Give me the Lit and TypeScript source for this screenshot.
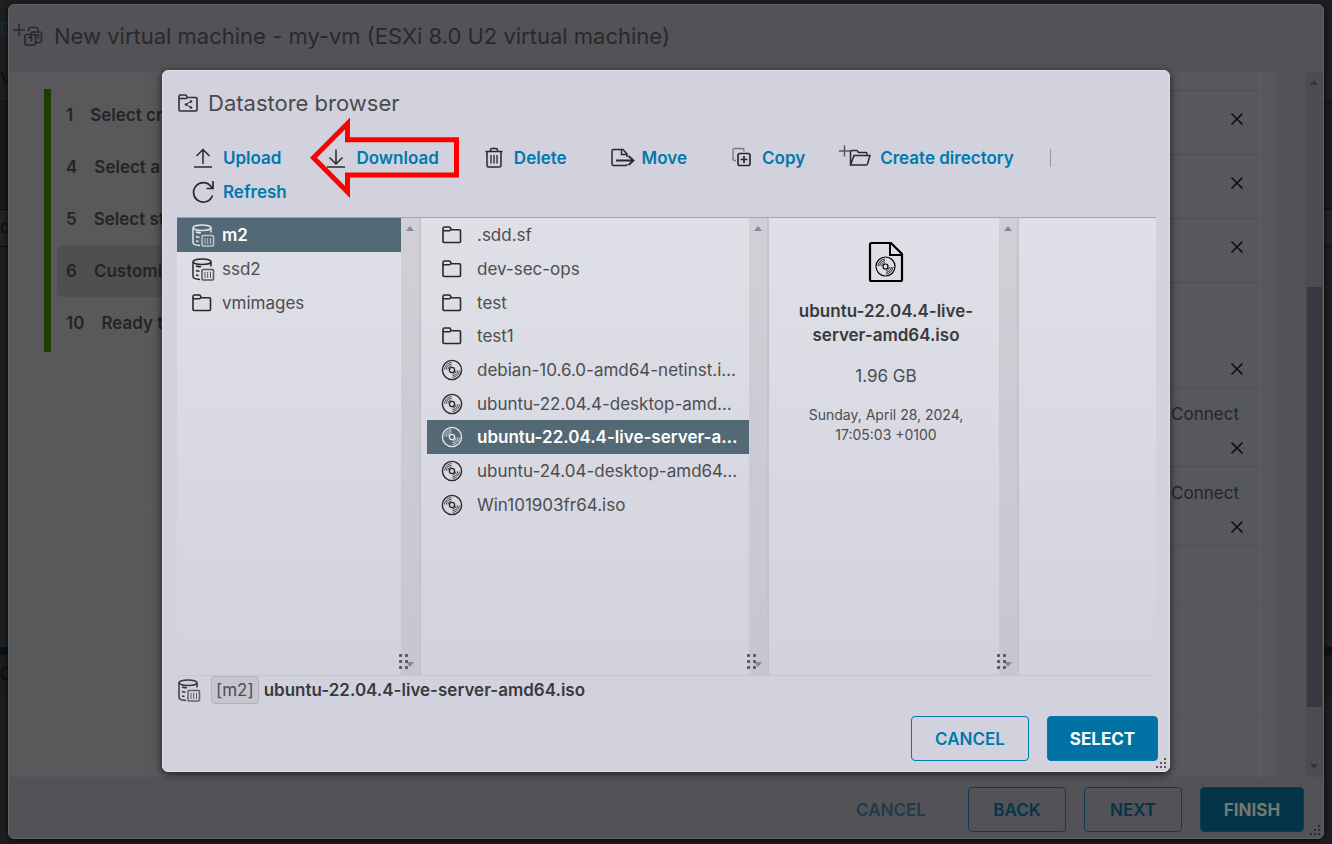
import { LitElement, html, css, svg, nothing } from "lit";
import { customElement, property, state } from "lit/decorators.js";
import { classMap } from "lit/directives/class-map.js";

const glyphs: Record<string, { w: number; h: number; body: unknown }> = {
  newVm: {
    w: 30, h: 24,
    body: svg`<path d="M6 0v12M0 6h12"/><path stroke-width="1.500" d="M15.500 7.500V5a1.500 1.500 0 0 1 1.500-1.500h6.500a1.500 1.500 0 0 1 1.500 1.500V7"/><rect x="12" y="10.500" width="10.500" height="10.500" rx="1.500" stroke-width="1.600"/><path stroke-width="1.600" d="M18 15V9.500Q18 8 19.500 8H27q1.500 0 1.500 1.500V17q0 1.500-1.500 1.500h-4M15 13.500h3.500v4M21.500 11h4v4"/>`,
  },
  folderShare: {
    w: 22, h: 22,
    body: svg`<path stroke-width="1.600" d="M2 18V4.500Q2 3 3.500 3h4.500q1 0 1.500 1l.8 1.500H19q1 0 1 1V18q0 1-1 1H3q-1 0-1-1zM2 6.500h8"/><path stroke-width="1" d="M14 9.500l-5 3 5 3"/><circle cx="14" cy="9.500" r=".6"/><circle cx="9" cy="12.500" r=".6"/><circle cx="14" cy="15.500" r=".6"/>`,
  },
  upload: { w: 22, h: 22, body: svg`<path d="M11 17V2.500M4.500 9L11 2.500 17.500 9M2 20h18"/>` },
  download: { w: 22, h: 22, body: svg`<path d="M11 2.500V17M4.500 10.500L11 17l6.500-6.500M2 20h18"/>` },
  refresh: { w: 22, h: 22, body: svg`<path stroke-width="1.700" d="M20.500 14.500A9.700 9.700 0 1 1 19 5.500l1.500 2M21 0v7.500h-6.500"/>` },
  trash: {
    w: 22, h: 22,
    body: svg`<path stroke-width="1.500" d="M2.500 4.500h17M7.500 4V3q0-1.500 1.500-1.500h4q1.500 0 1.500 1.500v1M4 5V18.500q0 1.500 1.500 1.500h11q1.500 0 1.500-1.500V5"/><path stroke-width="1.300" d="M8 8v8.500M11 8v8.500M14 8v8.500"/>`,
  },
  move: {
    w: 22, h: 22,
    body: svg`<path stroke-width="1.500" d="M16 10V7l-4-4.500H2.500Q1 2.500 1 4v13q0 1.500 1.500 1.500H14.500Q16 18.500 16 17M10.500 3v4.500H16"/><path stroke-width="1.900" d="M5 13.500h17M17.500 9l5 4.500-5 4.500"/>`,
  },
  copy: {
    w: 22, h: 22,
    body: svg`<path stroke="#77777f" stroke-width="1.300" d="M5 13.500H3.500Q2 13.500 2 12V3q0-1.500 1.500-1.500H11.500Q13 1.500 13 3v1.500"/><rect x="7" y="6.500" width="12" height="12" rx="1.500" stroke-width="1.700"/><path stroke-width="1.700" d="M13 9v7M9.500 12.500h7"/>`,
  },
  createDir: {
    w: 22, h: 22,
    body: svg`<path stroke="#55555c" d="M-4.500-1.500v11M-10 4h11"/><path stroke-width="1.500" d="M18 7.500V6.500Q18 5.500 17 5.500H9.500L8 3.500H3Q1.500 3.500 1.500 5V18M1.500 18L5 8.500h16l-2.500 8.500q-.5 1-1.500 1z"/>`,
  },
  folder: {
    w: 22, h: 22,
    body: svg`<path stroke-width="1.600" d="M2 18V4.500Q2 3 3.500 3h4.500q1 0 1.500 1l.8 1.700H18.500q1 0 1 1V17.500q0 1-1 1H3q-1 0-1-1zM2 6.800h6.500l1.500-1.100"/>`,
  },
  disc: {
    w: 22, h: 22,
    body: svg`<circle cx="11" cy="11" r="9.600" stroke-width="1.400"/><circle cx="11" cy="11" r="2.600" stroke-width="1.300"/><path stroke-width=".8" d="M3.500 10.500A7.600 7.600 0 0 1 10.500 3.500M5.200 10.500a6 6 0 0 1 5.300-5.300M6.800 10.500a4.300 4.300 0 0 1 3.700-3.700M18.500 11.500a7.600 7.600 0 0 1-7 7M16.800 11.500a6 6 0 0 1-5.300 5.300M15.200 11.500a4.300 4.300 0 0 1-3.700 3.700"/>`,
  },
  datastore: {
    w: 22, h: 24,
    body: svg`<ellipse cx="11" cy="4.800" rx="9" ry="2.800" stroke-width="1.500"/><path stroke-width="1.500" d="M2 5v14.500q0 2.500 7 3M20 5V9.500M5 9q2 .8 5 .8M5 13.500q1.500.6 3.500.7M5 18q1.200.4 2.500.5"/><rect x="11" y="12.500" width="11.500" height="10.500" rx="1" stroke-width="1.500" opacity=".75"/><path stroke-width="1" opacity=".75" d="M14 15v6M16.700 15v6M19.500 15v6"/>`,
  },
  iso: {
    w: 36, h: 42,
    body: svg`<path stroke-width="2.200" d="M2 3.500Q2 2 3.500 2H23L34 13V38.500Q34 40 32.500 40h-29Q2 40 2 38.500z"/><path stroke-width="2" d="M22 2.500V14h11.500"/><circle cx="17.500" cy="25.500" r="9.500" stroke-width="1.200"/><circle cx="17.500" cy="25.500" r="2.500" stroke-width="1.200"/><path stroke-width=".8" d="M10 25a7.500 7.500 0 0 1 7-7M11.700 25a5.800 5.800 0 0 1 5.300-5.300M13.400 25a4.200 4.200 0 0 1 3.600-3.600M25 26a7.500 7.500 0 0 1-7 7M23.300 26a5.800 5.800 0 0 1-5.300 5.300M21.600 26a4.200 4.200 0 0 1-3.600 3.600"/>`,
  },
  close: { w: 14, h: 14, body: svg`<path stroke-width="1.500" d="M1.500 1.500l11 11M12.500 1.500l-11 11"/>` },
};

function icon(name: string) {
  const g = glyphs[name];
  return html`<svg class="icon" width=${g.w} height=${g.h} viewBox="0 0 ${g.w} ${g.h}" aria-hidden="true">${g.body}</svg>`;
}

const shared = css`
  * { box-sizing: border-box; }
  ul, ol, p, h1, h2 { margin: 0; padding: 0; list-style: none; font-weight: inherit; }
  button { font: inherit; color: inherit; background: none; border: 0; padding: 0; margin: 0; cursor: pointer; }
  .icon { flex: none; display: block; overflow: visible; fill: none; stroke: currentColor; stroke-width: 1.5; }
  .action {
    height: 45px; padding: 0 16px; border: 1px solid #0079ad; border-radius: 4px;
    color: #0079ad; font-size: 17px; font-weight: 600; line-height: 20px; text-transform: uppercase;
  }
  .action.primary { background: #0072a3; color: #fff; font-weight: 700; }
  .up, .down { width: 0; height: 0; border: 4px solid transparent; }
  .up { border-top: 0; border-bottom: 5px solid #8686a4; }
  .down { border-bottom: 0; border-top: 5px solid #8686a4; }
  .grip { position: absolute; right: 3px; bottom: 3px; fill: #55555e; }
`;

const grip = html`<svg class="grip" width="10" height="10" viewBox="0 0 10 10" aria-hidden="true">${[
  [8, 0], [4, 4], [8, 4], [0, 8], [4, 8], [8, 8],
].map(([x, y]) => svg`<rect x=${x} y=${y} width="2" height="2"/>`)}</svg>`;

interface Entry { icon: string; name: string; }

@customElement("file-column")
class FileColumn extends LitElement {
  @property({ attribute: false }) entries: Entry[] = [];
  @property() selected = "";
  @property({ type: Boolean }) wide = false;

  static styles = [shared, css`
    :host { display: flex; min-width: 0; }
    .list { flex: 1; min-width: 0; }
    .wide { padding-left: 6px; }
    .entry {
      display: flex; align-items: center; width: 100%; height: 34px; padding: 0 4px 0 14px; gap: 9px;
      font-size: 17px; line-height: 24px; color: #4d4d50; white-space: nowrap; text-align: left;
    }
    li:nth-child(3n) .entry { height: 33px; }
    .wide .entry { gap: 14px; }
    .name { overflow: hidden; text-overflow: ellipsis; }
    .entry .icon { color: #29292b; }
    .entry.on { background: #546976; color: #fff; font-weight: 600; }
    .entry.on .icon { color: #dfe5e9; }
    .track {
      position: relative; display: flex; flex-direction: column; justify-content: space-between; align-items: center;
      width: 20px; padding: 8px 0; background: linear-gradient(#d0d0d6, #c6c6d2); border-right: 2px solid #c3c3cc;
    }
    .handle { position: absolute; left: -2px; bottom: 6px; fill: #55555c; }
  `];

  private pick(name: string) {
    this.selected = name;
  }

  render() {
    return html`
      <ul class=${classMap({ list: true, wide: this.wide })}>
        ${this.entries.map((e) => html`<li>
          <button class=${classMap({ entry: true, on: e.name === this.selected })} @click=${() => this.pick(e.name)}>
            ${icon(e.icon)}<span class="name">${e.name}</span>
          </button>
        </li>`)}
        <slot></slot>
      </ul>
      <div class="track">
        <span class="up"></span>
        <svg class="handle" width="9" height="15" viewBox="0 0 9 15" aria-hidden="true">
          ${[0, 6, 12].map((y) => svg`<rect y=${y} width="3" height="3" rx="1"/><rect x="6" y=${y} width="3" height="3" rx="1"/>`)}
        </svg>
        <span class="down"></span>
      </div>`;
  }
}

@customElement("datastore-browser")
class DatastoreBrowser extends LitElement {
  static styles = [shared, css`
    :host {
      display: flex; flex-direction: column; padding: 0 11px 10px 14px; color: #3a3a3c;
      background: #d2d2de; border: 1px solid #e2e2ec; border-radius: 6px; box-shadow: 0 2px 9px rgba(0, 0, 0, .7);
    }
    .title { display: flex; align-items: center; gap: 9px; height: 64px; font-size: 22px; line-height: 28px; color: #4a4a4c; }
    .title .icon { color: #303033; }
    .tools { display: flex; flex-wrap: wrap; align-items: center; column-gap: 44px; padding: 6px 15px 8px; }
    .tool { display: flex; align-items: center; gap: 9px; height: 34px; color: #0079ad; font-size: 17px; font-weight: 600; line-height: 24px; }
    .tool .icon { color: #29292b; }
    .divider { width: 1px; height: 18px; margin-left: -8px; background: #96969e; }
    .panes {
      flex: 1; min-height: 0; margin-right: 2px; display: grid; grid-template-columns: 244fr 348fr 250fr 137fr;
      background: linear-gradient(#dfe0e7, #d2d2de); border-top: 1px solid #a3a3ab; border-bottom: 1px solid #c6c6cd;
    }
    .preview { display: flex; flex-direction: column; align-items: center; padding: 23px 20px 0 24px; text-align: center; }
    .preview .icon { color: #000; }
    .file { margin-top: 16px; font-size: 17px; font-weight: 600; line-height: 24px; }
    .size { margin: 17px 0; font-size: 17px; line-height: 24px; color: #4d4d50; }
    .date { font-size: 14px; line-height: 20px; color: #4d4d50; }
    .path { display: flex; align-items: center; height: 27px; font-size: 17px; line-height: 24px; }
    .tag { margin: 0 5px 0 12px; padding: 1px 4px; border: 1px solid #b2b2ba; border-radius: 4px; background: #c6c6d0; color: #4d4d50; }
    .chosen { font-weight: 600; }
    .actions { display: flex; justify-content: flex-end; gap: 18px; margin-top: 13px; }
    .actions .action { min-width: 111px; }
    .actions .wide { min-width: 118px; }
  `];

  private stores: Entry[] = [
    { icon: "datastore", name: "m2" },
    { icon: "datastore", name: "ssd2" },
    { icon: "folder", name: "vmimages" },
  ];

  private files: Entry[] = [
    { icon: "folder", name: ".sdd.sf" },
    { icon: "folder", name: "dev-sec-ops" },
    { icon: "folder", name: "test" },
    { icon: "folder", name: "test1" },
    { icon: "disc", name: "debian-10.6.0-amd64-netinst.i…" },
    { icon: "disc", name: "ubuntu-22.04.4-desktop-amd…" },
    { icon: "disc", name: "ubuntu-22.04.4-live-server-a…" },
    { icon: "disc", name: "ubuntu-24.04-desktop-amd64…" },
    { icon: "disc", name: "Win101903fr64.iso" },
  ];

  private tool(name: string, label: string) {
    return html`<button class="tool">${icon(name)}<span>${label}</span></button>`;
  }

  render() {
    return html`
      <h2 class="title">${icon("folderShare")}<span>Datastore browser</span></h2>
      <div class="tools">
        ${this.tool("upload", "Upload")} ${this.tool("download", "Download")} ${this.tool("trash", "Delete")}
        ${this.tool("move", "Move")} ${this.tool("copy", "Copy")} ${this.tool("createDir", "Create directory")}
        <span class="divider"></span>
        ${this.tool("refresh", "Refresh")}
      </div>
      <div class="panes">
        <file-column .entries=${this.stores} selected="m2"></file-column>
        <file-column wide .entries=${this.files} selected="ubuntu-22.04.4-live-server-a…"></file-column>
        <file-column>
          <div class="preview">
            ${icon("iso")}
            <p class="file">ubuntu-22.04.4-live-server-amd64.iso</p>
            <p class="size">1.96 GB</p>
            <p class="date">Sunday, April 28, 2024, 17:05:03 +0100</p>
          </div>
        </file-column>
      </div>
      <div class="path">${icon("datastore")}<span class="tag">[m2]</span><span class="chosen">ubuntu-22.04.4-live-server-amd64.iso</span></div>
      <div class="actions">
        <button class="action wide">Cancel</button>
        <button class="action primary">Select</button>
      </div>
      ${grip}`;
  }
}

@customElement("vm-wizard")
class VmWizard extends LitElement {
  @state() private current = 6;

  static styles = [shared, css`
    :host {
      display: flex; flex-direction: column; color: #242426; background: #535257;
      border: 1px solid #626266; border-radius: 6px; box-shadow: 0 1px 6px rgba(0, 0, 0, .8);
    }
    .title { display: flex; align-items: center; gap: 11px; height: 67px; padding: 0 4px 6px; font-size: 22px; line-height: 28px; color: #29292b; }
    .body { flex: 1; min-height: 0; display: flex; background: linear-gradient(90deg, #59595b, #57585c); overflow: hidden; }
    .steps { align-self: flex-start; margin: 17px 0 0 35px; padding-bottom: 3px; border-left: 7px solid #1c3d04; }
    .step { display: flex; align-items: center; height: 52px; width: 240px; margin-left: 6px; padding-left: 9px; gap: 17px; border-radius: 6px; font-size: 17px; font-weight: 600; line-height: 24px; }
    .step.on { background: #4f4f51; }
    .hardware { flex: 1; display: flex; justify-content: flex-end; padding-right: 15px; }
    .rows { width: 160px; border-right: 1px solid #5f6064; }
    .row { display: flex; flex-direction: column; justify-content: flex-end; align-items: flex-end; gap: 17px; padding: 0 15px 28px 0; height: 64px; border-bottom: 1px solid #4e4e51; font-size: 17px; line-height: 20px; }
    .row.first { height: 19px; padding: 0; }
    .row.tall { height: 105px; padding-bottom: 11px; }
    .row.mid { height: 79px; padding-bottom: 11px; }
    .row.blank { height: 62px; border-color: #535356; }
    .row.gap { height: 108px; border-color: #535356; }
    .remove { color: #0c0c0d; }
    .connect { padding-right: 5px; }
    .gutter { width: 30px; background: #545358; }
    .track { display: flex; flex-direction: column; align-items: center; width: 18px; padding: 8px 0; background: #4d4c51; }
    .thumb { width: 15px; margin: auto 0 57px; height: 61%; background: #383742; }
    .track .up { border-bottom-color: #34343f; }
    .track .down { border-top-color: #34343f; }
    .foot { display: flex; align-items: center; justify-content: flex-end; gap: 18px; height: 61px; padding: 4px 19px 0 0; }
    .foot .action { min-width: 98px; border-color: #0a3f56; color: #05354a; }
    .foot .primary { min-width: 104px; background: #043448; color: #77786f; }
    .foot .plain { min-width: 118px; border-color: transparent; color: #1e3b4d; }
    .grip { fill: #2b2b30; }
  `];

  private steps: [number, string][] = [
    [1, "Select creation type"],
    [4, "Select a name"],
    [5, "Select storage"],
    [6, "Customize settings"],
    [10, "Ready to complete"],
  ];

  private rows: { kind: string; remove?: boolean; connect?: boolean }[] = [
    { kind: "first" },
    { kind: "", remove: true },
    { kind: "", remove: true },
    { kind: "", remove: true },
    { kind: "tall", remove: true },
    { kind: "mid", remove: true, connect: true },
    { kind: "mid", remove: true, connect: true },
    { kind: "blank" },
    { kind: "gap" },
  ];

  render() {
    return html`
      <h1 class="title">${icon("newVm")}<span>New virtual machine - my-vm (ESXi 8.0 U2 virtual machine)</span></h1>
      <div class="body">
        <ol class="steps">
          ${this.steps.map(([n, label]) => html`<li>
            <button class=${classMap({ step: true, on: n === this.current })} @click=${() => (this.current = n)}>
              <span>${n}</span><span>${label}</span>
            </button>
          </li>`)}
        </ol>
        <div class="hardware">
          <div class="rows">
            ${this.rows.map((r) => html`<div class="row ${r.kind}">
              ${r.connect ? html`<span class="connect">Connect</span>` : nothing}
              ${r.remove ? html`<button class="remove" aria-label="Remove">${icon("close")}</button>` : nothing}
            </div>`)}
          </div>
        </div>
        <div class="gutter"></div>
        <div class="track"><span class="up"></span><span class="thumb"></span><span class="down"></span></div>
      </div>
      <div class="foot">
        <button class="action plain">Cancel</button>
        <button class="action">Back</button>
        <button class="action">Next</button>
        <button class="action primary">Finish</button>
      </div>
      ${grip}`;
  }
}

@customElement("app-root")
class AppRoot extends LitElement {
  static styles = [shared, css`
    :host {
      display: block; position: relative; height: 100vh; overflow: hidden; background: #1f1f21;
      font-family: Inter, "Open Sans", sans-serif; text-align: left;
    }
    .behind { display: flex; flex-direction: column; height: 100%; font-size: 17px; line-height: 24px; color: #0b0b0c; }
    .bar { height: 56px; padding-top: 17px; color: #0a3548; }
    .tabs { height: 45px; padding-top: 10px; border-bottom: 1px solid #161618; }
    .tree { height: 108px; background: #1a1a1d; }
    .field { height: 38px; border: 1px solid #0d0d0e; border-width: 1px 0; background: #232324; line-height: 34px; }
    .space { height: 400px; }
    .edge { height: 8px; background: #071317; }
    .recent { height: 40px; background: #1b1b1e; line-height: 38px; }
    .wizard { position: absolute; inset: 4px 8px 5px 8px; }
    .browser { position: absolute; inset: 70px 162px 72px 162px; }
    .arrow { position: absolute; left: 309px; top: 117px; fill: none; stroke: #f00; stroke-width: 5; }
  `];

  render() {
    return html`
      <div class="behind">
        <div class="bar">C</div>
        <div class="tabs">V</div>
        <div class="tree"></div>
        <div class="field">ck</div>
        <div class="space"></div>
        <div class="edge"></div>
        <div class="recent">C</div>
      </div>
      <vm-wizard class="wizard"></vm-wizard>
      <datastore-browser class="browser"></datastore-browser>
      <svg class="arrow" width="151" height="82" viewBox="0 0 151 82" aria-hidden="true">
        <path stroke-miterlimit="8" d="M4.500 40.700L38.500 6.500V22.800H147.500V58H38.500V74.900Z"/>
      </svg>`;
  }
}
